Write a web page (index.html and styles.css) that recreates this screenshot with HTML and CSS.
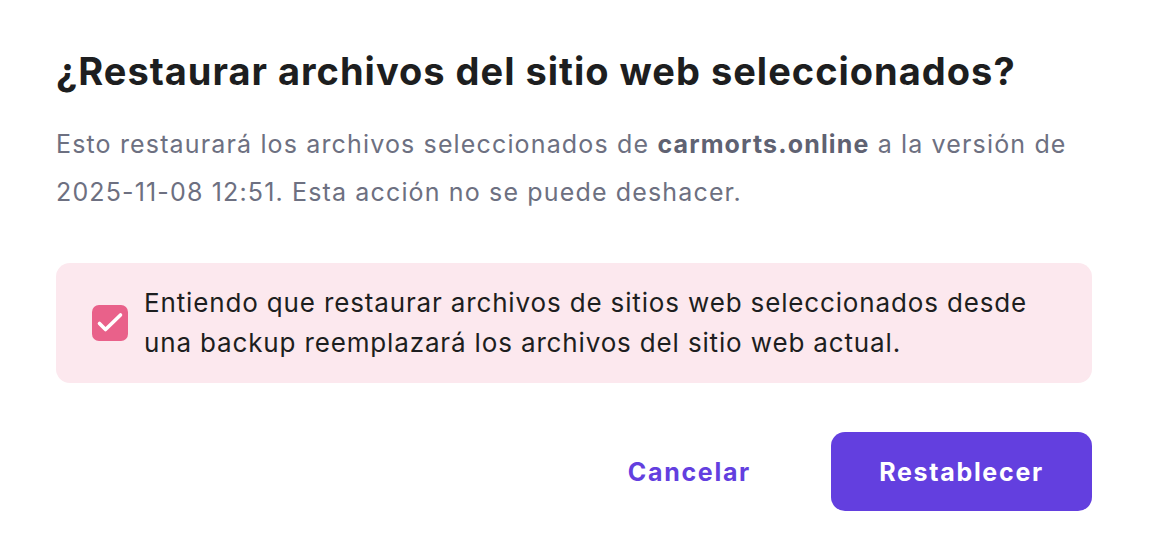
FILE: index.html
```html
<!DOCTYPE html>
<html lang="es">
<head>
<meta charset="utf-8">
<link rel="stylesheet" href="styles.css">
</head>
<body>
<div class="dialog">
  <h1 class="title">¿Restaurar archivos del sitio web seleccionados?</h1>
  <p class="desc">Esto restaurará los archivos seleccionados de <strong>carmorts.online</strong> a la versión de <span class="nowrap">2025-11-08 12:51</span>. Esta acción no se puede deshacer.</p>
  <label class="confirm">
    <span class="checkbox">
      <svg width="36" height="36" viewBox="0 0 36 36" fill="none"><path d="M7.5 18.5l6 6L28.5 10" stroke="#fff" stroke-width="3.6" stroke-linecap="round" stroke-linejoin="round"/></svg>
    </span>
    <span class="confirm-text">Entiendo que restaurar archivos de sitios web seleccionados desde una backup reemplazará los archivos del sitio web actual.</span>
  </label>
  <div class="actions">
    <button class="btn-link">Cancelar</button>
    <button class="btn-primary">Restablecer</button>
  </div>
</div>
</body>
</html>
```

FILE: styles.css
```css
* { box-sizing: border-box; }
html, body { margin: 0; padding: 0; background: #fff; }
body { font-family: "Inter", "DejaVu Sans", sans-serif; }
.dialog {
  width: 1154px;
  padding: 47px 62px 0 56px;
}
.title {
  margin: 0;
  font-size: 38px;
  line-height: 48px;
  font-weight: 700;
  color: #1d1e20;
  letter-spacing: 1px;
}
.desc {
  margin: 25px 0 0;
  font-size: 25px;
  line-height: 48px;
  color: #6d7081;
  font-weight: 400;
  letter-spacing: 1.15px;
}
.desc strong { font-weight: 700; color: #5f6272; }
.nowrap { white-space: nowrap; }
.confirm {
  margin-top: 47px;
  display: flex;
  align-items: center;
  gap: 16px;
  background: #fce8ee;
  border-radius: 14px;
  padding: 20px 36px;
  min-height: 119px;
}
.checkbox {
  flex: none;
  width: 36px;
  height: 36px;
  border-radius: 7px;
  background: #e9618a;
  display: flex;
  align-items: center;
  justify-content: center;
}
.checkbox svg { display: block; }
.confirm-text {
  font-size: 26px;
  line-height: 40px;
  color: #1d1e20;
  letter-spacing: 0.85px;
}
.actions {
  margin-top: 49px;
  display: flex;
  justify-content: flex-end;
  align-items: center;
  gap: 56px;
}
.btn-link, .btn-primary {
  font-family: inherit;
  font-size: 25px;
  font-weight: 700;
  letter-spacing: 1.7px;
  border: 0;
  cursor: pointer;
}
.btn-link {
  background: none;
  color: #633fdf;
  padding: 0 24px;
}
.btn-primary {
  width: 261px;
  height: 79px;
  border-radius: 14px;
  background: #633fdf;
  color: #fff;
}
```
